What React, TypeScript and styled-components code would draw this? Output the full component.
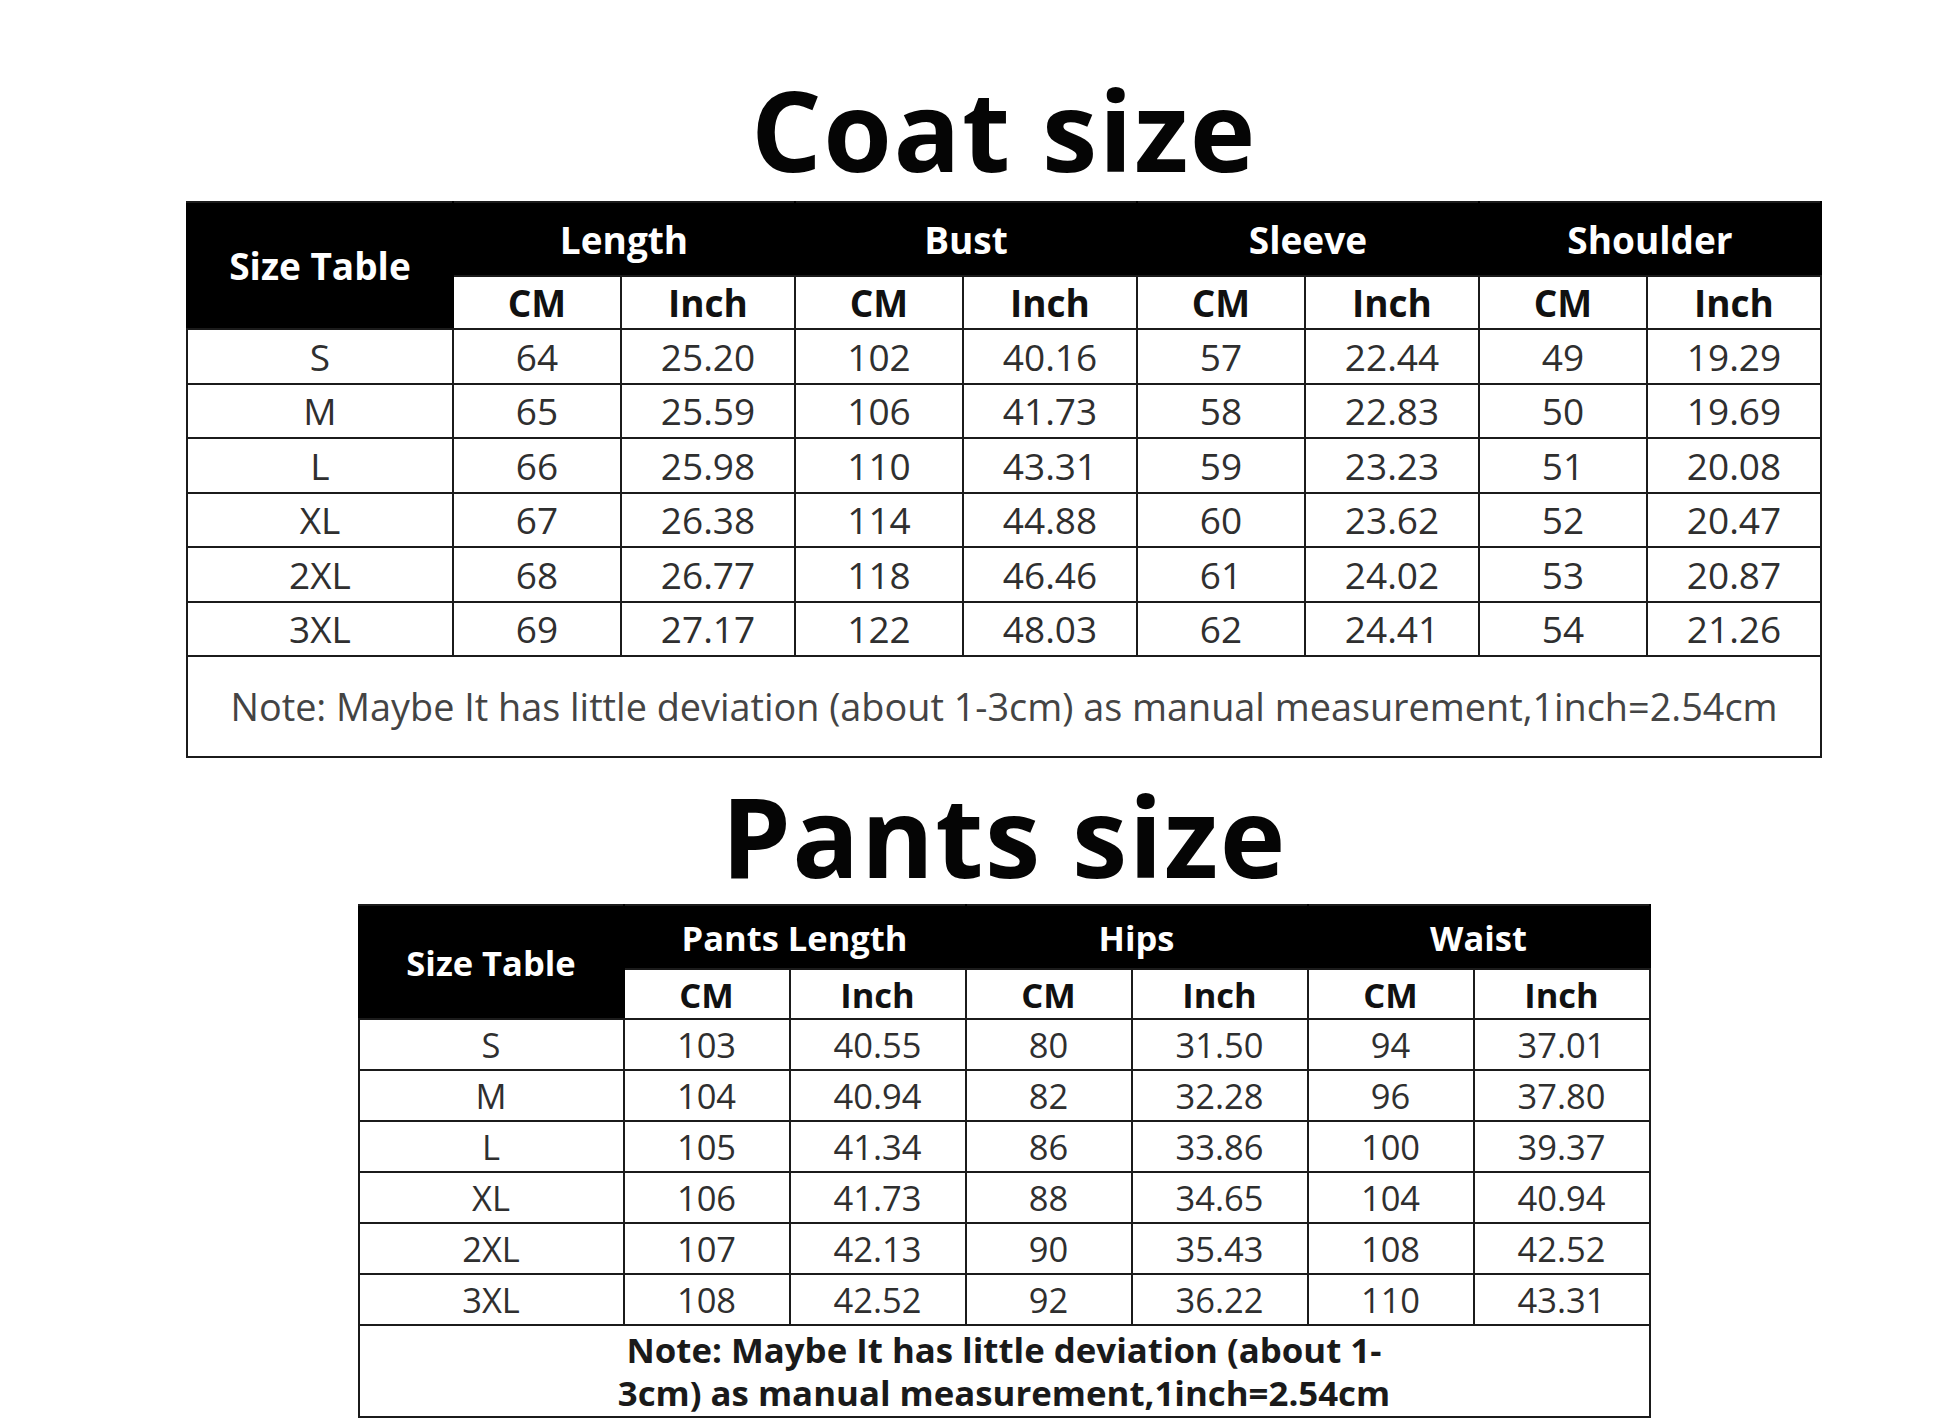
import styled, { createGlobalStyle } from "styled-components";

const GlobalStyle = createGlobalStyle`
  html, body {
    margin: 0;
    padding: 0;
    background: #fff;
  }
  body {
    font-family: "Open Sans", "Liberation Sans", sans-serif;
  }
`;

const Page = styled.div`
  width: 1946px;
  box-sizing: border-box;
  padding: 74px 0 0 62px;
  display: flex;
  flex-direction: column;
  align-items: center;
`;

const Title = styled.h1<{ $gapTop: number; $gapBottom: number }>`
  margin: ${(p) => p.$gapTop}px 0 ${(p) => p.$gapBottom}px 0;
  font-family: "Open Sans", sans-serif;
  font-weight: 700;
  font-size: 111px;
  line-height: 110px;
  color: #050505;
  letter-spacing: 1.5px;
`;

const Table = styled.table<{ $font: number }>`
  border-collapse: collapse;
  table-layout: fixed;
  border: 2px solid #1b1b1b;
  font-family: "Open Sans", sans-serif;
  font-size: ${(p) => p.$font}px;
  text-align: center;

  td,
  th {
    border: 2px solid #1b1b1b;
    padding: 0;
  }
`;

const Row = styled.tr<{ $h: number }>`
  height: ${(p) => p.$h}px;
`;

const GroupHead = styled.th`
  background: #000;
  color: #fff;
  font-weight: 700;
  border-left-color: #000 !important;
  border-right-color: #000 !important;
`;

const UnitHead = styled.th`
  background: #fff;
  color: #111;
  font-weight: 700;
`;

const Cell = styled.td`
  color: #2f2f2f;
  font-weight: 400;
`;

const NoteCell = styled.td<{ $bold?: boolean }>`
  color: ${(p) => (p.$bold ? "#1a1a1a" : "#444")};
  font-weight: ${(p) => (p.$bold ? 700 : 400)};
`;

const NoteText = styled.div<{ $max: number; $lh: number; $font: number }>`
  max-width: ${(p) => p.$max}px;
  margin: 0 auto;
  font-size: ${(p) => p.$font}px;
  line-height: ${(p) => p.$lh}px;
`;

type Chart = {
  groups: string[];
  rows: (string | number)[][];
  note: string;
  sizeCol: number;
  cmCol: number;
  inchCol: number;
  font: number;
  noteFont: number;
  h1: number;
  h2: number;
  rowH: number;
  noteH: number;
  noteBold?: boolean;
  noteMax: number;
  noteLh: number;
};

const SizeChart = ({ chart }: { chart: Chart }) => {
  const units = chart.groups.flatMap(() => ["CM", "Inch"]);
  return (
    <Table $font={chart.font}>
      <colgroup>
        <col style={{ width: chart.sizeCol }} />
        {units.map((u, i) => (
          <col key={i} style={{ width: u === "CM" ? chart.cmCol : chart.inchCol }} />
        ))}
      </colgroup>
      <thead>
        <Row $h={chart.h1}>
          <GroupHead rowSpan={2}>Size Table</GroupHead>
          {chart.groups.map((g) => (
            <GroupHead key={g} colSpan={2}>
              {g}
            </GroupHead>
          ))}
        </Row>
        <Row $h={chart.h2}>
          {units.map((u, i) => (
            <UnitHead key={i}>{u}</UnitHead>
          ))}
        </Row>
      </thead>
      <tbody>
        {chart.rows.map((r) => (
          <Row $h={chart.rowH} key={r[0]}>
            {r.map((v, i) => (
              <Cell key={i}>{v}</Cell>
            ))}
          </Row>
        ))}
        <Row $h={chart.noteH}>
          <NoteCell colSpan={units.length + 1} $bold={chart.noteBold}>
            <NoteText $max={chart.noteMax} $lh={chart.noteLh} $font={chart.noteFont}>
              {chart.note}
            </NoteText>
          </NoteCell>
        </Row>
      </tbody>
    </Table>
  );
};

const note =
  "Note: Maybe It has little deviation (about 1-3cm) as manual measurement,1inch=2.54cm";

const coat: Chart = {
  groups: ["Length", "Bust", "Sleeve", "Shoulder"],
  rows: [
    ["S", 64, "25.20", 102, "40.16", 57, "22.44", 49, "19.29"],
    ["M", 65, "25.59", 106, "41.73", 58, "22.83", 50, "19.69"],
    ["L", 66, "25.98", 110, "43.31", 59, "23.23", 51, "20.08"],
    ["XL", 67, "26.38", 114, "44.88", 60, "23.62", 52, "20.47"],
    ["2XL", 68, "26.77", 118, "46.46", 61, "24.02", 53, "20.87"],
    ["3XL", 69, "27.17", 122, "48.03", 62, "24.41", 54, "21.26"],
  ],
  note,
  sizeCol: 266,
  cmCol: 168,
  inchCol: 174,
  font: 37,
  noteFont: 37.8,
  h1: 74,
  h2: 53,
  rowH: 54.5,
  noteH: 101,
  noteMax: 1620,
  noteLh: 50,
};

const pants: Chart = {
  groups: ["Pants Length", "Hips", "Waist"],
  rows: [
    ["S", 103, "40.55", 80, "31.50", 94, "37.01"],
    ["M", 104, "40.94", 82, "32.28", 96, "37.80"],
    ["L", 105, "41.34", 86, "33.86", 100, "39.37"],
    ["XL", 106, "41.73", 88, "34.65", 104, "40.94"],
    ["2XL", 107, "42.13", 90, "35.43", 108, "42.52"],
    ["3XL", 108, "42.52", 92, "36.22", 110, "43.31"],
  ],
  note,
  sizeCol: 265,
  cmCol: 166,
  inchCol: 176,
  font: 34.5,
  noteFont: 34.8,
  h1: 64,
  h2: 50,
  rowH: 51,
  noteH: 92,
  noteBold: true,
  noteMax: 810,
  noteLh: 43,
};

export default function App() {
  return (
    <>
      <GlobalStyle />
      <Page>
        <Title $gapTop={0} $gapBottom={17}>
          Coat size
        </Title>
        <SizeChart chart={coat} />
        <Title $gapTop={22} $gapBottom={14}>
          Pants size
        </Title>
        <SizeChart chart={pants} />
      </Page>
    </>
  );
}
